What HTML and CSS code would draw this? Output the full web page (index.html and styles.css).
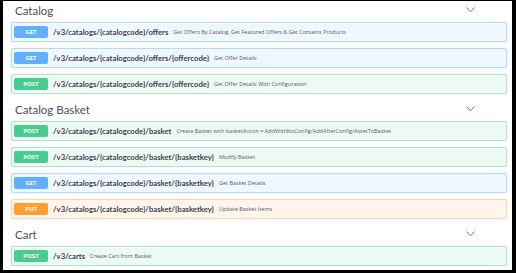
FILE: index.html
```html
<!DOCTYPE html>
<html lang="en">
<head>
<meta charset="UTF-8">
<title>API</title>
<link rel="stylesheet" href="styles.css">
</head>
<body>
<div class="panel">

    <div class="section">
        <div class="tag">
            <span class="tag-name">Catalog</span>
            <svg class="chevron" width="9" height="6" viewBox="0 0 9 6"><path d="M0.5 0.5 L4.5 4.8 L8.5 0.5" fill="none" stroke="#777" stroke-width="1"/></svg>
        </div>
        <div class="op get">
            <span class="method">GET</span>
            <span class="path">/v3/catalogs/{catalogcode}/offers</span>
            <span class="desc">Get Offers By Catalog, Get Featured Offers &amp; Get Contains Products</span>
        </div>
        <div class="op get">
            <span class="method">GET</span>
            <span class="path">/v3/catalogs/{catalogcode}/offers/{offercode}</span>
            <span class="desc">Get Offer Details</span>
        </div>
        <div class="op post">
            <span class="method">POST</span>
            <span class="path">/v3/catalogs/{catalogcode}/offers/{offercode}</span>
            <span class="desc">Get Offer Details With Configuration</span>
        </div>
    </div>

    <div class="section">
        <div class="tag">
            <span class="tag-name">Catalog Basket</span>
            <svg class="chevron" width="9" height="6" viewBox="0 0 9 6"><path d="M0.5 0.5 L4.5 4.8 L8.5 0.5" fill="none" stroke="#777" stroke-width="1"/></svg>
        </div>
        <div class="op post">
            <span class="method">POST</span>
            <span class="path">/v3/catalogs/{catalogcode}/basket</span>
            <span class="desc">Create Basket with basketAction = AddWithNoConfig/AddAfterConfig/AssetToBasket</span>
        </div>
        <div class="op post">
            <span class="method">POST</span>
            <span class="path">/v3/catalogs/{catalogcode}/basket/{basketkey}</span>
            <span class="desc">Modify Basket</span>
        </div>
        <div class="op get">
            <span class="method">GET</span>
            <span class="path">/v3/catalogs/{catalogcode}/basket/{basketkey}</span>
            <span class="desc">Get Basket Details</span>
        </div>
        <div class="op put">
            <span class="method">PUT</span>
            <span class="path">/v3/catalogs/{catalogcode}/basket/{basketkey}</span>
            <span class="desc">Update Basket Items</span>
        </div>
    </div>

    <div class="section">
        <div class="tag">
            <span class="tag-name">Cart</span>
            <svg class="chevron" width="9" height="6" viewBox="0 0 9 6"><path d="M0.5 0.5 L4.5 4.8 L8.5 0.5" fill="none" stroke="#777" stroke-width="1"/></svg>
        </div>
        <div class="op post">
            <span class="method">POST</span>
            <span class="path">/v3/carts</span>
            <span class="desc">Create Cart from Basket</span>
        </div>
    </div>

</div>
</body>
</html>
```

FILE: styles.css
```css
html, body {
    margin: 0;
    padding: 0;
    height: 100%;
}

body {
    background-color: #000;
    font-family: "Open Sans", "Liberation Sans", sans-serif;
    color: #3b4151;
}

.panel {
    margin: 1px 4px 0 3px;
    height: 269px;
    overflow: hidden;
    background-color: #fff;
    padding: 0 5px 0 8px;
}

.section + .section {
    margin-top: 2px;
}

.tag {
    height: 21px;
    display: flex;
    align-items: center;
    justify-content: space-between;
    padding: 0 32px 0 4px;
}

.tag-name {
    font-family: "Lato", "Open Sans", sans-serif;
    font-size: 11.5px;
    color: #4a5060;
    margin-top: -2px;
}

.chevron {
    margin-top: -4px;
}

.op {
    height: 18px;
    margin-bottom: 6px;
    border: 1px solid;
    border-radius: 2px;
    display: flex;
    align-items: center;
    padding: 0 2px;
    box-shadow: 0 0 2px rgba(0, 0, 0, 0.12);
}

.method {
    width: 34px;
    height: 12px;
    line-height: 12px;
    border-radius: 2px;
    color: #fff;
    font-size: 6px;
    font-weight: bold;
    text-align: center;
    flex-shrink: 0;
}

.path {
    margin-left: 5px;
    font-family: "Lato", "Open Sans", sans-serif;
    font-size: 7.7px;
    font-weight: bold;
    white-space: nowrap;
}

.desc {
    margin-left: 5px;
    font-size: 5.5px;
    color: #555b68;
    white-space: nowrap;
}

.get {
    background-color: #eff7ff;
    border-color: #b6d8fb;
}

.get .method {
    background-color: #61affe;
}

.post {
    background-color: #edfaf4;
    border-color: #b5e4cc;
}

.post .method {
    background-color: #49cc90;
}

.put {
    background-color: #fff5ea;
    border-color: #f8d9b4;
}

.put .method {
    background-color: #fca130;
}
```
